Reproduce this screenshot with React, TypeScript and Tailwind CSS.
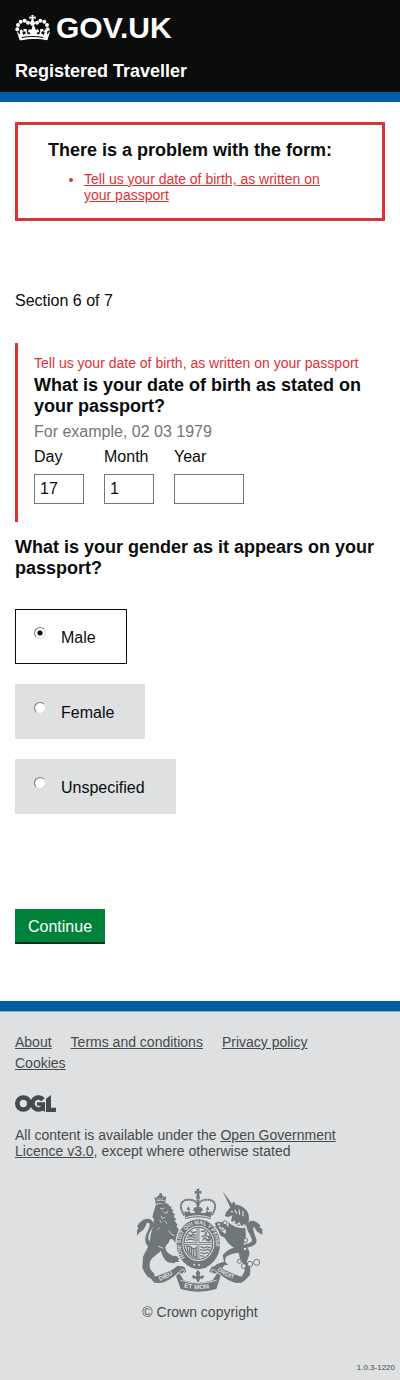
import { useState } from "react";

function Crown() {
  return (
    <svg viewBox="0 0 105 78" className="h-[26px] w-[35px]" fill="#fff" aria-hidden="true">
      <circle cx="7" cy="43" r="6" />
      <circle cx="9" cy="30" r="6" />
      <circle cx="17" cy="20" r="6" />
      <circle cx="29" cy="17" r="6" />
      <circle cx="39" cy="23" r="6" />
      <circle cx="98" cy="43" r="6" />
      <circle cx="96" cy="30" r="6" />
      <circle cx="88" cy="20" r="6" />
      <circle cx="76" cy="17" r="6" />
      <circle cx="66" cy="23" r="6" />
      <path d="M49 0h7l-1 6 7-2v8l-7-2 2 9a6 6 0 0 1 1 10l-3 4h-5l-3-4a6 6 0 0 1 1-10l2-9-7 2V4l7 2z" />
      <path
        fillRule="evenodd"
        d="M14 76 5 48l10 11-1-12 6-4 4 6-2 3 3 8 8-5-3-6-5 1 1-9 10 2-1 6 3 9 8 0-2-6-6 0 4-9 7 1 4-12h5l4 12 7-1 4 9-6 0-2 6 8 0 3-9-1-6 10-2 1 9-5-1-3 6 8 5 3-8-2-3 4-6 6 4-1 12 10-11-9 28c-24-5-53-5-77 0zM21 69c21-4 42-4 63 0l1-3c-22-4-43-4-65 0z"
      />
    </svg>
  );
}

function OglLogo() {
  return (
    <svg viewBox="0 0 123 51" className="h-[17px] w-[41px]" role="img" aria-label="OGL" fill="none" stroke="#454a4c">
      <circle cx="25" cy="25.500" r="18" strokeWidth="14" />
      <path d="M84 14a18 18 0 1 0 0 23" strokeWidth="14" />
      <path d="M66 22h24v29l-12-8v-11H66z" fill="#454a4c" stroke="none" />
      <path d="M93 11 108 0v38h15v13H93z" fill="#454a4c" stroke="none" />
    </svg>
  );
}

function RoyalArms() {
  const ink = "#6f777b";
  const paper = "#dee0e2";
  return (
    <svg viewBox="24 24 378 312" className="h-[104px] w-[126px]" fill={ink} role="img" aria-label="Royal coat of arms">
      <defs>
        <path id="garter" d="M168 232A53 60 0 1 1 248 232" />
        <path id="dieu" d="M92 303Q122 293 147 271" />
        <path id="etmon" d="M164 322Q208 334 254 321" />
        <path id="droit" d="M264 271Q292 294 328 300" />
      </defs>

      {/* lion */}
      <path d="M76 50l6 4 4-6 7-3 7 1 5 5 7-2-4 22c-9-3-20-2-27 2z" />
      <circle cx="95" cy="43" r="4" />
      <path d="M83 63q11-5 24-1M84 56l4 3M92 54l1 4M101 54l-1 4" fill="none" stroke={paper} strokeWidth="2.500" />
      <path d="M80 76c12-7 30-8 40-3l-2 4 11 3-4 4 9 8-5 3 10 10-6 2 9 12-6 2 10 14-4 3 8 12-2 6 10 14 4 12-3 12 5 9-9-3-4 7-8-14-12-15-7-1-6 12-8 9c-3 12 4 20 13 25l9 4 11 1 9 9-5 3 4 6-12 0-3 4-20-3c-12-10-18-23-20-35-10 10-25 18-31 29-4 9-5 18 0 28l12 14-2 4 11 7-16 1-13-3-9-12-8-17 2-33c7-15 17-29 20-44 3-11 1-20 6-32l7-35-5-9z" />
      <path d="M73 211c-21-11-29-27-22-46 6-17 17-32 7-37-8-2-4 12-18 24-7 5-13 7-16 16v-16l4-8-4-6c9-12 20-23 34-22 16 2 18 18 10 31-11 19-19 33 9 50z" />
      <path d="M93 84l8 3 5-4M104 96l9 4 4-8M96 107l4 9 9-5M92 120l6 9M107 122l7 9M85 149l7-6M119 152l10 12 8 2M124 183l13 9M87 198l16 7" fill="none" stroke={paper} strokeWidth="2.500" />

      {/* unicorn */}
      <path d="M281 34l33 45-8 8zM306 76l8-12 6 10c18 1 34 13 39 30l1 15-6 17c-15 7-35 1-48-14l4-16-14 6-8-5 3-10 12-14z" />
      <path d="M298 126c15 15 34 20 51 18l1 18c2 15-3 24-6 31l14 15c5 9 4 17 0 24l-5 15 11 17-1 21-18 19-8-2 2-13 8-17-2-17-12-19-4-18c-14 1-28 5-38 12l-3 14 9 11-12 1-5 9-26 1 0-5 10-9 21-7-4-19c9-13 23-21 34-23-12-7-21-18-28-30l-14-7-6-16-12-4-10 7-4-7 8-8 17 0 12 16 12 8 1-12-13-9-17-3-4-8 10-5 16 2 16 14z" />
      <path d="M346 204c30-2 41-14 35-29-8-22-11-33-6-35 5 7 7 15 15 18l10 7v-18l-9-5 3-6c-8-9-20-17-31-13-15 6-11 22-3 37 10 19 17 28-12 32z" />
      <path d="M317 90l6 10M330 89l2 15M342 93v16M306 94l6 2M300 117l6 14 10-7 3 13 12-8 4 12 14-8" fill="none" stroke={paper} strokeWidth="3.500" />
      <g fill={paper} stroke={ink} strokeWidth="3">
        <circle cx="270" cy="133" r="5" />
        <circle cx="288" cy="128" r="6" />
        <circle cx="281" cy="146" r="5" />
        <circle cx="350" cy="181" r="6" />
        <circle cx="348" cy="207" r="5" />
        <circle cx="331" cy="244" r="6" />
        <circle cx="344" cy="258" r="7" />
        <circle cx="363" cy="252" r="8" />
        <circle cx="383" cy="247" r="9" />
      </g>

      {/* ribbon */}
      <path d="M62 292l20-3 24-9q26-10 40-23l20 3 6 15-13 6-10-5q-26 27-55 33l-18-1zM352 292l-20-3-22-9q-24-9-42-23l-20 3-7 15 15 6 10-5q24 24 54 33l18-1zM151 279l13 22q44 14 87 0l14-22 10 8-13 40q-54 16-107 0l-14-40z" />
      <path d="M155 301q53 17 108 0M151 275l11-8 5 7-6 6M263 275l-11-8-5 7 6 6" fill="none" stroke={paper} strokeWidth="2.500" />
      <path d="M207 267l8 11-2 10 8-4 6 6-6 8-7-1-3 10h-8l-3-10-7 1-6-8 6-6 8 4-2-10z" stroke={paper} strokeWidth="3" />

      {/* garter and shield */}
      <ellipse cx="208" cy="192" rx="67" ry="76" stroke={paper} strokeWidth="4" />
      <ellipse cx="208" cy="190" rx="48" ry="53" fill={paper} />
      <ellipse cx="208" cy="190" rx="43" ry="48" fill="none" stroke={ink} strokeWidth="4" />
      <path d="M207 143v94M165 190h86" stroke={ink} strokeWidth="8" />
      <path d="M207 143v94M165 190h86" stroke={paper} strokeWidth="3" />
      <path
        d="M176 163l9 4 7-4 10 4M173 172l14-3 14 5M171 181l12-4 19 4M184 154l9 4 9-3M216 154l9-1 8 7-6 6 10 4 7 9-9 0-8-6-7 9M229 178l9 5 8-4M217 170l8-2M240 166l5 10M173 198l4 18 13 12 12 5-1-30q-9 7-16-3zM182 202v18M188 203v22M194 207v22M214 200l11 4 9-4 11 4M213 209l13 3 9-4 9 4M214 218l12 3 12-4M213 227l12 2"
        fill="none"
        stroke={ink}
        strokeWidth="4"
      />
      <path d="M176 237l10 11 42 2 12-9-8 22-24 5-20-5z" />
      <circle cx="196" cy="254" r="3" fill={paper} />
      <circle cx="210" cy="255" r="3" fill={paper} />

      {/* crown above the shield */}
      <path d="M202 26h10l-2 8 7-2v10l-7-2 2 8h-10l2-8-7 2V32l7 2z" />
      <circle cx="207" cy="53" r="6" />
      <path d="M166 106c-19-28-10-47 13-47 15 0 24 6 28 17 4-11 13-17 28-17 23 0 32 19 13 47" fill="none" stroke={ink} strokeWidth="6" strokeDasharray="6 1" />
      <path d="M207 59v42" stroke={ink} strokeWidth="8" strokeDasharray="6 1" />
      <path d="M166 94l11 3 2-7-6 0 5-12 6 12-4 0 4 9 14 0-2-7-5 0 6-10h20l6 10-5 0-2 7 14 0 4-9-4 0 6-12 5 12-6 0 2 7 11-3-3 24q-38-12-76 0z" />
      <path d="M170 113q37-12 74 0" fill="none" stroke={paper} strokeWidth="3" />

      <g fill={paper} fontFamily="Liberation Sans, sans-serif" fontWeight="700" fontSize="16">
        <text>
          <textPath href="#garter">HONI SOIT QUI MAL Y PENSE</textPath>
        </text>
        <text fontSize="19">
          <textPath href="#dieu">DIEU</textPath>
        </text>
        <text fontSize="20">
          <textPath href="#etmon">ET MON</textPath>
        </text>
        <text fontSize="18">
          <textPath href="#droit">DROIT</textPath>
        </text>
      </g>
    </svg>
  );
}

const dateFields = [
  { id: "day", label: "Day", value: "17", box: "w-[50px]" },
  { id: "month", label: "Month", value: "1", box: "w-[50px]" },
  { id: "year", label: "Year", value: "", box: "w-[70px]" },
];

const genders = ["Male", "Female", "Unspecified"];

const footerLinks = ["About", "Terms and conditions", "Privacy policy", "Cookies"];

export default function App() {
  const [gender, setGender] = useState("Male");

  return (
    <div className="bg-white font-['Liberation_Sans',Arial,sans-serif] text-base text-[#0b0c0c]">
      <header className="border-b-10 border-[#005ea5] bg-[#0b0c0c] px-[15px] pt-3 pb-2.5 text-white">
        <a href="#home" className="flex items-center gap-1.5 text-[30px] leading-8 font-bold">
          <Crown />
          GOV.UK
        </a>
        <p className="mt-4 text-lg leading-[22px] font-bold">Registered Traveller</p>
      </header>

      <main className="px-[15px] pt-5 pb-[57px]">
        <section aria-labelledby="error-title" className="border-3 border-[#df3034] px-[30px] pt-[15px] pb-[15px]">
          <h1 id="error-title" className="text-lg leading-5 font-bold">
            There is a problem with the form:
          </h1>
          <ul className="mt-[11px] list-disc pr-5 pl-9 text-sm leading-4 text-[#df3034]">
            <li>
              <a href="#day" className="underline">
                Tell us your date of birth, as written on your passport
              </a>
            </li>
          </ul>
        </section>

        <p className="mt-[70px] leading-5">Section 6 of 7</p>

        <form onSubmit={(e) => e.preventDefault()}>
          <fieldset className="mt-8 border-l-3 border-[#df3034] pt-3 pb-[18px] pl-4">
            <legend className="contents">
              <span className="block text-sm leading-4 text-[#df3034]">
                Tell us your date of birth, as written on your passport
              </span>
              <span className="mt-1 block text-lg leading-[21px] font-bold">
                What is your date of birth as stated on your passport?
              </span>
              <span className="mt-[5px] block leading-5 text-[#6f777b]">For example, 02 03 1979</span>
            </legend>
            <div className="mt-[5px] flex gap-5">
              {dateFields.map((f) => (
                <div key={f.id}>
                  <label htmlFor={f.id} className="block leading-5">
                    {f.label}
                  </label>
                  <input
                    id={f.id}
                    type="text"
                    inputMode="numeric"
                    defaultValue={f.value}
                    className={`mt-[7px] block h-[30px] border border-[#6f777b] bg-white px-[5px] ${f.box}`}
                  />
                </div>
              ))}
            </div>
          </fieldset>

          <fieldset className="mt-[15px]">
            <legend className="text-lg leading-[21px] font-bold">
              What is your gender as it appears on your passport?
            </legend>
            <div className="mt-[30px] flex flex-col items-start gap-5">
              {genders.map((g) => (
                <label
                  key={g}
                  className={`flex h-[55px] items-start border pr-[30px] pl-[18px] ${
                    gender === g ? "border-[#0b0c0c] bg-white" : "border-[#dee0e2] bg-[#dee0e2]"
                  }`}
                >
                  <input
                    type="radio"
                    name="gender"
                    value={g}
                    checked={gender === g}
                    onChange={() => setGender(g)}
                    className="mt-[17px] h-3 w-3 appearance-none rounded-full border border-t-[#777] border-r-[#ddd] border-b-[#ddd] border-l-[#777] bg-white checked:bg-[radial-gradient(circle,#000_2px,#fff_3px)]"
                  />
                  <span className="mt-[18px] ml-[15px] leading-5">{g}</span>
                </label>
              ))}
            </div>
          </fieldset>

          <button
            type="submit"
            className="mt-[95px] block border-b-2 border-[#003618] bg-[#00823b] px-[13px] pt-2 pb-[5px] leading-5 text-white"
          >
            Continue
          </button>
        </form>
      </main>

      <footer className="border-t-10 border-[#005ea5] bg-[#dee0e2] text-sm text-[#454a4c]">
        <div className="border-t border-[#a1acb2] px-[15px] pt-5">
          <ul className="flex flex-wrap leading-[21px]">
            {footerLinks.map((l) => (
              <li key={l} className="mr-[19px]">
                <a href="#footer" className="underline">
                  {l}
                </a>
              </li>
            ))}
          </ul>
          <div className="mt-[21px]">
            <OglLogo />
          </div>
          <p className="mt-[15px] leading-4">
            All content is available under the{" "}
            <a href="#licence" className="underline">
              Open Government Licence v3.0
            </a>
            , except where otherwise stated
          </p>
          <a href="#copyright" className="mt-[29px] flex flex-col items-center gap-3 leading-4">
            <RoyalArms />
            © Crown copyright
          </a>
        </div>
        <p className="pt-[42px] pr-[5px] pb-1.5 text-right text-[8px] leading-3">1.0.3-1220</p>
      </footer>
    </div>
  );
}
